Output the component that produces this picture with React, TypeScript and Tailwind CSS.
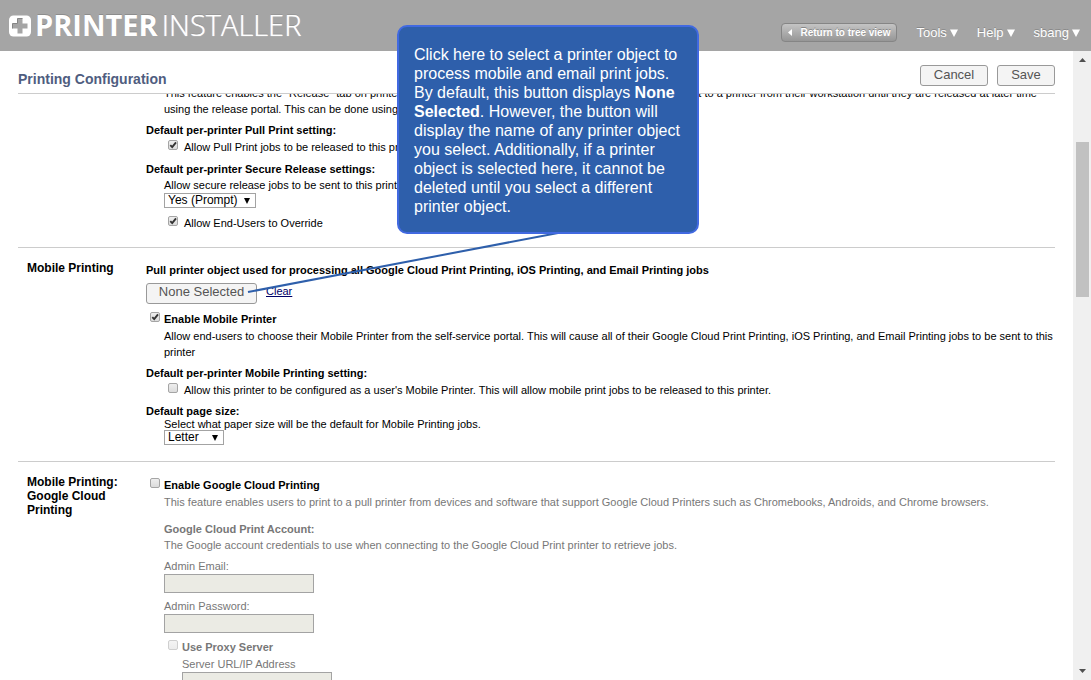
import type { ReactNode } from "react";

type CheckProps = {
  id: string;
  label: string;
  checked?: boolean;
  disabled?: boolean;
  bold?: boolean;
  gap?: "tight" | "wide";
};

function Check({ id, label, checked, disabled, bold, gap = "tight" }: CheckProps) {
  return (
    <div className={`flex items-start pl-1 ${gap === "wide" ? "gap-1.5" : "gap-1"}`}>
      <span className="mt-px grid h-[10px] w-[10px] shrink-0">
        <input
          id={id}
          type="checkbox"
          defaultChecked={checked}
          disabled={disabled}
          className="peer col-start-1 row-start-1 h-[10px] w-[10px] appearance-none rounded-[2px] border border-[#a5a5a5] bg-linear-to-b from-[#eeeeee] to-[#dcdcdc] disabled:border-[#cfcfcf] disabled:from-[#f4f4f4] disabled:to-[#ececec]"
        />
        <svg
          viewBox="0 0 10 10"
          className="pointer-events-none invisible col-start-1 row-start-1 h-[10px] w-[10px] peer-checked:visible"
          aria-hidden="true"
        >
          <path d="M2.3 5.2 L4.2 7.1 L8 2.3" fill="none" stroke="#333" strokeWidth="1.9" />
        </svg>
      </span>
      <label htmlFor={id} className={bold ? "font-bold" : ""}>
        {label}
      </label>
    </div>
  );
}

function Select({ id, name, options, width }: { id: string; name: string; options: string[]; width: string }) {
  return (
    <div className={`grid h-[15px] ${width}`}>
      <select
        id={id}
        aria-label={name}
        className="col-start-1 row-start-1 h-[15px] w-full appearance-none border border-[#a3a3a3] bg-white pl-[3px] text-[12px] leading-[13px] text-black"
      >
        {options.map((o) => (
          <option key={o}>{o}</option>
        ))}
      </select>
      <svg
        viewBox="0 0 6 6"
        className="pointer-events-none col-start-1 row-start-1 mr-[6px] h-[6px] w-[6px] self-center justify-self-end"
        aria-hidden="true"
      >
        <path d="M0 0 H6 L3 6 Z" fill="#000" />
      </svg>
    </div>
  );
}

function Section({ title, children }: { title: string; children: ReactNode }) {
  return (
    <section className="flex border-t border-[#cccccc] pt-[13px]">
      <h2 className="w-[128px] shrink-0 pr-3 pl-[9px] text-[12px] leading-[14px] font-bold">{title}</h2>
      <div className="min-w-0 flex-1 pt-px">{children}</div>
    </section>
  );
}

function Field({ id, label, type = "text" }: { id: string; label: string; type?: string }) {
  return (
    <div>
      <label htmlFor={id} className="block">
        {label}
      </label>
      <input
        id={id}
        type={type}
        disabled
        className="block h-[19px] w-[150px] border border-[#a3a3a3] bg-[#ebebe4] px-1"
      />
    </div>
  );
}

function NavMenu({ label }: { label: string }) {
  return (
    <button type="button" className="flex items-center gap-[3px] text-[13px] leading-4 [text-shadow:0_-1px_0_#888888]">
      {label}
      <svg viewBox="0 0 8 8" className="h-2 w-2" aria-hidden="true">
        <path d="M0 0.5 H8 L4 8 Z" fill="#fff" />
      </svg>
    </button>
  );
}

const actionButton =
  "h-[21px] rounded-[3px] border border-[#999999] bg-[#f4f4f4] text-[13px] leading-4 text-[#555555]";

export default function App() {
  return (
    <div className="relative flex h-screen flex-col overflow-hidden bg-white font-['Liberation_Sans',Arial,sans-serif] text-[11px] leading-4 text-black">
      <header className="flex h-[51px] shrink-0 items-center justify-between bg-[#a5a5a5] pr-[11px] pl-[9px] text-white">
        <div className="flex items-center gap-[3px]">
          <svg viewBox="0 0 23 22" className="h-[22px] w-[23px]" aria-hidden="true">
            <rect x="0" y="0.5" width="22" height="21" rx="4.5" fill="#fff" />
            <path
              d="M8.5 3.5 H13.5 V8.5 H18.5 V13.5 H13.5 V18.5 H8.5 V13.5 H3.5 V8.5 H8.5 Z"
              fill="#a5a5a5"
            />
            <path d="M3.5 13.5 V8.5 H8.5 V3.5 H13.5" fill="none" stroke="#858585" strokeWidth="1" />
          </svg>
          <div className="flex gap-1 pb-0.5 font-['Open_Sans',sans-serif] text-[29px] leading-[48px]">
            <span className="font-bold [text-shadow:0_-1px_0_#8c8c8c]">PRINTER</span>
            <span className="font-light [text-shadow:0_0_1px_#ffffff,0_-1px_0_#8c8c8c]">INSTALLER</span>
          </div>
        </div>
        <nav className="flex items-center gap-[19px] pt-[14px]">
          <button
            type="button"
            className="flex h-[19px] items-center gap-2 rounded-[4px] border border-[#858585] bg-linear-to-b from-[#c4c4c4] to-[#969696] px-[6px] text-[10px] font-bold [text-shadow:0_-1px_0_#888888]"
          >
            <svg viewBox="0 0 4 7" className="h-[7px] w-1" aria-hidden="true">
              <path d="M4 0 V7 L0 3.5 Z" fill="#fff" />
            </svg>
            Return to tree view
          </button>
          <NavMenu label="Tools" />
          <NavMenu label="Help" />
          <NavMenu label="sbang" />
        </nav>
      </header>

      <div className="flex min-h-0 flex-1">
        <main className="flex min-w-0 flex-1 flex-col px-[18px]">
          <div className="flex h-[43px] shrink-0 items-center justify-between border-b border-[#cccccc] pt-[14px]">
            <h1 className="text-[14px] font-bold text-[#4f5d80]">Printing Configuration</h1>
            <div className="flex gap-[9px] pb-2">
              <button type="button" className={`${actionButton} w-[68px]`}>
                Cancel
              </button>
              <button type="button" className={`${actionButton} w-[58px]`}>
                Save
              </button>
            </div>
          </div>

          <div className="min-h-0 flex-1 overflow-hidden">
            <div className="-mt-[9px] flex flex-col gap-4">
              <section className="pl-[128px]">
                <p className="pl-[18px]">
                  This feature enables the "Release" tab on printers in the portal. Users can hold all the print jobs they have sent to a printer from their
                  workstation until they are released at later time using the release portal. This can be done using a browser.
                </p>
                <h3 className="mt-[5px] font-bold">Default per-printer Pull Print setting:</h3>
                <div className="mt-px pl-[18px]">
                  <Check id="pull" gap="wide" checked label="Allow Pull Print jobs to be released to this printer" />
                </div>
                <h3 className="mt-[6px] font-bold">Default per-printer Secure Release settings:</h3>
                <div className="pl-[18px]">
                  <p>Allow secure release jobs to be sent to this printer</p>
                  <Select id="secure" name="Secure release" width="w-[92px]" options={["Yes (Prompt)", "Yes", "No"]} />
                  <div className="mt-[7px]">
                    <Check id="override" gap="wide" checked label="Allow End-Users to Override" />
                  </div>
                </div>
              </section>

              <Section title="Mobile Printing">
                <h3 className="font-bold">
                  Pull printer object used for processing all Google Cloud Print Printing, iOS Printing, and Email Printing jobs
                </h3>
                <div className="mt-[5px] flex gap-[9px]">
                  <button type="button" className={`${actionButton} w-[111px] pb-1`}>
                    None Selected
                  </button>
                  <a href="#clear" className="text-[#000066] underline">
                    Clear
                  </a>
                </div>
                <div className="mt-[7px]">
                  <Check id="mobile" bold checked label="Enable Mobile Printer" />
                </div>
                <p className="mt-px pl-[18px]">
                  Allow end-users to choose their Mobile Printer from the self-service portal. This will cause all of their
                  Google Cloud Print Printing, iOS Printing, and Email Printing jobs to be sent to this printer
                </p>
                <h3 className="mt-[5px] font-bold">Default per-printer Mobile Printing setting:</h3>
                <div className="mt-px pl-[18px]">
                  <Check
                    id="mobile-default"
                    gap="wide"
                    label="Allow this printer to be configured as a user's Mobile Printer. This will allow mobile print jobs to be released to this printer."
                  />
                </div>
                <h3 className="mt-[7px] leading-[13px] font-bold">Default page size:</h3>
                <div className="pl-[18px]">
                  <p className="leading-3">Select what paper size will be the default for Mobile Printing jobs.</p>
                  <Select id="paper" name="Default page size" width="w-[60px]" options={["Letter", "A4", "Legal"]} />
                </div>
              </Section>

              <Section title="Mobile Printing: Google Cloud Printing">
                <div className="pt-px">
                  <Check id="gcp" bold label="Enable Google Cloud Printing" />
                </div>
                <div className="pl-[18px] text-[#777777]">
                  <p className="mt-px">
                    This feature enables users to print to a pull printer from devices and software that support Google
                    Cloud Printers such as Chromebooks, Androids, and Chrome browsers.
                  </p>
                  <h3 className="mt-[11px] font-bold">Google Cloud Print Account:</h3>
                  <p>The Google account credentials to use when connecting to the Google Cloud Print printer to retrieve jobs.</p>
                  <div className="mt-[5px] flex flex-col gap-[5px]">
                    <Field id="email" label="Admin Email:" />
                    <Field id="password" label="Admin Password:" type="password" />
                    <div className="flex flex-col gap-px pt-px">
                      <Check id="proxy" bold disabled label="Use Proxy Server" />
                      <div className="pl-[18px]">
                        <Field id="server" label="Server URL/IP Address" />
                      </div>
                    </div>
                  </div>
                </div>
              </Section>
            </div>
          </div>
        </main>

        <div className="flex w-[18px] shrink-0 flex-col items-center bg-[#f0f0f0] py-[7px]" aria-hidden="true">
          <svg viewBox="0 0 7 4" className="h-1 w-[7px]">
            <path d="M0 4 H7 L3.5 0 Z" fill="#505050" />
          </svg>
          <div className="mt-[80px] h-[155px] w-[13px] bg-[#c1c1c1]" />
          <svg viewBox="0 0 7 4" className="mt-auto h-1 w-[7px]">
            <path d="M0 0 H7 L3.5 4 Z" fill="#505050" />
          </svg>
        </div>
      </div>

      <svg
        viewBox="0 0 312 62"
        className="pointer-events-none absolute top-[232px] left-[247px] h-[62px] w-[312px]"
        aria-hidden="true"
      >
        <path d="M1 60 L311 1" stroke="#2e5fab" strokeWidth="2" fill="none" />
      </svg>
      <div
        role="tooltip"
        className="absolute top-[25px] left-[397px] w-[302px] rounded-[10px] border-2 border-[#4169e1] bg-[#2e5fab] pt-[18px] pr-2 pb-4 pl-[15px] text-[16px] leading-[19px] text-white"
      >
        Click here to select a printer object to process mobile and email print jobs. By default, this button displays{" "}
        <strong>None Selected</strong>. However, the button will display the name of any printer object you select.
        Additionally, if a printer object is selected here, it cannot be deleted until you select a different printer
        object.
      </div>
    </div>
  );
}
